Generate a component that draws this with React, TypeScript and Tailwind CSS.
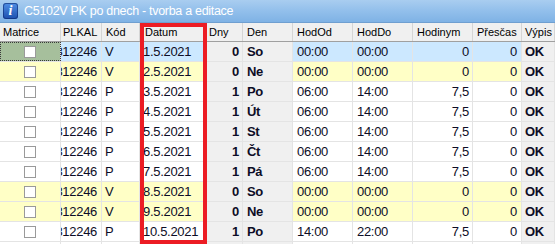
type Row = {
  datum: string;
  kod: string;
  dny: string;
  den: string;
  od: string;
  hdo: string;
  hod: string;
  pres: string;
  kind: "sel" | "weekend" | "work";
};

const rows: Row[] = [
  { datum: "1.5.2021", kod: "V", dny: "0", den: "So", od: "00:00", hdo: "00:00", hod: "0", pres: "0", kind: "sel" },
  { datum: "2.5.2021", kod: "V", dny: "0", den: "Ne", od: "00:00", hdo: "00:00", hod: "0", pres: "0", kind: "weekend" },
  { datum: "3.5.2021", kod: "P", dny: "1", den: "Po", od: "06:00", hdo: "14:00", hod: "7,5", pres: "0", kind: "work" },
  { datum: "4.5.2021", kod: "P", dny: "1", den: "Út", od: "06:00", hdo: "14:00", hod: "7,5", pres: "0", kind: "work" },
  { datum: "5.5.2021", kod: "P", dny: "1", den: "St", od: "06:00", hdo: "14:00", hod: "7,5", pres: "0", kind: "work" },
  { datum: "6.5.2021", kod: "P", dny: "1", den: "Čt", od: "06:00", hdo: "14:00", hod: "7,5", pres: "0", kind: "work" },
  { datum: "7.5.2021", kod: "P", dny: "1", den: "Pá", od: "06:00", hdo: "14:00", hod: "7,5", pres: "0", kind: "work" },
  { datum: "8.5.2021", kod: "V", dny: "0", den: "So", od: "00:00", hdo: "00:00", hod: "0", pres: "0", kind: "weekend" },
  { datum: "9.5.2021", kod: "V", dny: "0", den: "Ne", od: "00:00", hdo: "00:00", hod: "0", pres: "0", kind: "weekend" },
  { datum: "10.5.2021", kod: "P", dny: "1", den: "Po", od: "14:00", hdo: "22:00", hod: "7,5", pres: "0", kind: "work" },
  { datum: "11.5.2021", kod: "P", dny: "1", den: "Út", od: "14:00", hdo: "22:00", hod: "7,5", pres: "0", kind: "work" },
];

const headers = [
  { label: "Matrice", cls: "w-[61px] pl-[3px]" },
  { label: "PLKAL", cls: "w-[41px] pl-[2px]" },
  { label: "Kód", cls: "w-[38px] pl-[4px]" },
  { label: "Datum", cls: "w-[66px] pl-[5px]" },
  { label: "Dny", cls: "w-[37px] pl-[3px]" },
  { label: "Den", cls: "w-[50px] pl-[4px]" },
  { label: "HodOd", cls: "w-[60px] pl-[4px]" },
  { label: "HodDo", cls: "w-[60px] pl-[4px]" },
  { label: "Hodinym", cls: "w-[60px] pl-[4px]" },
  { label: "Přesčas", cls: "w-[49px] pl-[4px]" },
  { label: "Výpis", cls: "flex-1 pl-[3px]" },
];

const rowBg = {
  sel: "bg-[#cce8ff]",
  weekend: "bg-[#ffffc6]",
  work: "bg-white",
};

const cell = "h-full flex items-center border-r border-[#e4e4e4] overflow-hidden whitespace-nowrap";
const fixedCol = "bg-[#f0f0f0]";

function Checkbox() {
  return <div className="h-[12px] w-[12px] border border-[#9a9a9a] bg-white" />;
}

function GridRow({ r }: { r: Row }) {
  const bg = rowBg[r.kind];
  const matriceBg = r.kind === "sel" ? "bg-[#a6bf9c] outline-1 outline-dotted outline-[#3a3a3a] -outline-offset-1" : bg;
  return (
    <div className="flex h-[20px] shrink-0 border-b border-[#e4e4e4]">
      <div className={`${cell} w-[61px] justify-center ${matriceBg}`}>
        <Checkbox />
      </div>
      {/* the PLKAL value is wider than its column and shows clipped on the left */}
      <div className={`${cell} w-[41px] justify-end pr-[4px] ${bg}`}>812246</div>
      <div className={`${cell} w-[38px] pl-[3px] ${bg}`}>{r.kod}</div>
      <div className={`${cell} w-[66px] pl-[3px] ${bg}`}>{r.datum}</div>
      <div className={`${cell} w-[37px] justify-end pr-[3px] font-bold ${fixedCol}`}>{r.dny}</div>
      <div className={`${cell} w-[50px] pl-[4px] font-bold ${fixedCol}`}>{r.den}</div>
      <div className={`${cell} w-[60px] pl-[4px] ${bg}`}>{r.od}</div>
      <div className={`${cell} w-[60px] pl-[4px] ${bg}`}>{r.hdo}</div>
      <div className={`${cell} w-[60px] justify-end pr-[3px] ${bg}`}>{r.hod}</div>
      <div className={`${cell} w-[49px] justify-end pr-[4px] ${bg}`}>{r.pres}</div>
      <div className={`${cell} flex-1 pl-[3px] font-bold ${fixedCol}`}>OK</div>
    </div>
  );
}

export default function App() {
  return (
    <div className="relative flex h-[244px] w-[555px] flex-col overflow-hidden bg-[#f0f0f0] font-['Liberation_Sans',Arial,sans-serif] text-black">
      {/* title bar */}
      <div className="flex h-[23px] shrink-0 items-center gap-[6px] border-b border-[#6f9fd0] bg-gradient-to-b from-[#a9cdf0] via-[#92bfeb] to-[#7fb2e5] pl-[3px]">
        <div className="flex h-[16px] w-[15px] items-center justify-center rounded-[3px] bg-gradient-to-b from-[#4f8fe6] to-[#1d4fae] shadow-[inset_0_0_0_1px_rgba(10,40,110,0.6)]">
          <span className="font-['Liberation_Serif',serif] text-[14px] font-bold italic leading-none text-white">i</span>
        </div>
        <span className="text-[12.5px] tracking-[-0.3px] text-white">C5102V PK po dnech - tvorba a editace</span>
      </div>

      {/* header */}
      <div className="flex h-[19px] shrink-0 border-b border-[#a0a0a0] bg-[#f0f0f0] text-[11px]">
        {headers.map((h) => (
          <div key={h.label} className={`${h.cls} flex h-full items-center border-r border-[#d5d5d5] whitespace-nowrap`}>
            {h.label}
          </div>
        ))}
      </div>

      {/* rows */}
      <div className="flex flex-col text-[13px] tracking-[-0.3px] text-[#0d0d26]">
        {rows.map((r) => (
          <GridRow key={r.datum} r={r} />
        ))}
      </div>

      {/* red highlight round the Datum column */}
      <div className="pointer-events-none absolute left-[140px] top-[23px] h-[221px] w-[67px] border-4 border-[#ec1c24]" />
    </div>
  );
}
